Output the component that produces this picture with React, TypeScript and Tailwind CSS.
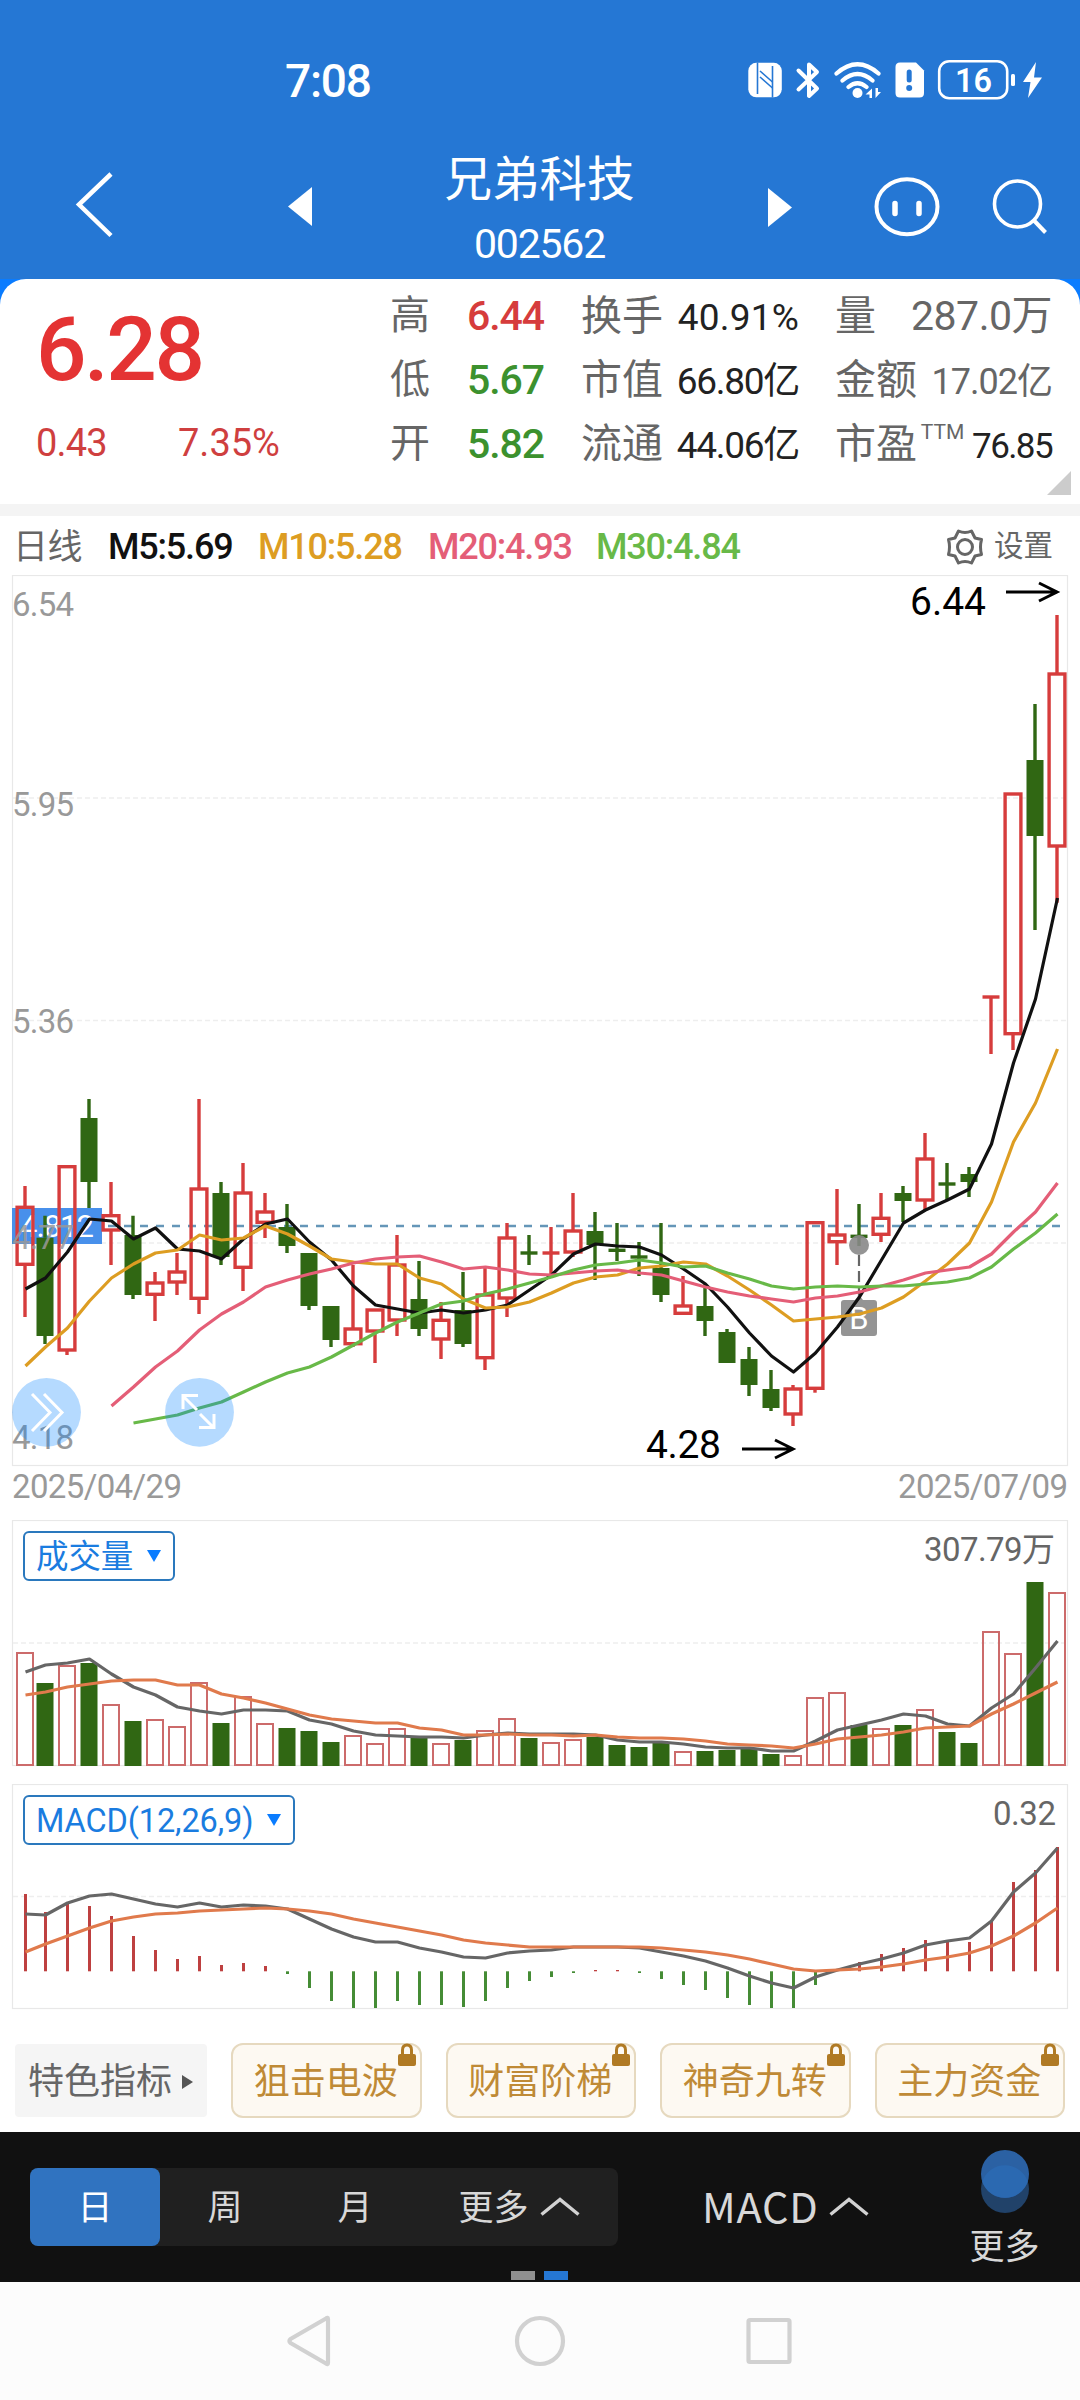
import React from "react";

const RED = "#d63c3c";
const GREEN = "#306713";

// direction, high, body top, body bottom, low
type Candle = [string, number, number, number, number];

const candles: Candle[] = [
  ["up", 1186, 1207.3, 1264.3, 1317],
  ["down", 1215.7, 1237.7, 1336, 1344],
  ["up", 1166.7, 1166.7, 1350, 1355],
  ["down", 1099, 1118, 1182, 1208],
  ["up", 1182, 1215.7, 1230, 1265],
  ["down", 1215.7, 1235, 1295, 1299],
  ["up", 1272, 1283, 1294.3, 1321],
  ["up", 1253, 1272, 1282, 1295],
  ["up", 1099, 1189, 1298.3, 1314],
  ["down", 1182, 1193, 1257, 1265],
  ["up", 1163, 1193, 1267.3, 1291],
  ["up", 1193, 1212, 1222.3, 1238],
  ["down", 1204, 1227, 1246, 1253],
  ["down", 1253, 1253, 1306, 1310],
  ["down", 1306, 1306, 1340, 1347],
  ["up", 1265, 1329, 1343.7, 1347],
  ["up", 1310, 1310, 1331, 1363],
  ["up", 1235, 1265, 1320, 1336],
  ["down", 1261, 1299, 1329, 1336],
  ["up", 1302, 1320.3, 1339, 1359],
  ["down", 1272, 1310, 1344, 1347],
  ["up", 1267, 1295, 1357.7, 1370],
  ["up", 1223, 1238, 1298, 1317],
  ["down", 1235, 1253, 1253, 1265],
  ["up", 1227, 1253, 1253, 1275],
  ["up", 1193, 1231, 1252, 1257],
  ["down", 1212, 1231, 1245, 1280],
  ["down", 1223, 1250.3, 1250.3, 1261],
  ["down", 1242, 1257, 1257, 1276],
  ["down", 1223, 1268, 1295, 1302],
  ["up", 1276, 1306, 1313.3, 1315],
  ["down", 1284, 1306, 1321, 1336],
  ["down", 1329, 1332, 1363, 1363],
  ["down", 1347, 1359, 1385, 1396],
  ["down", 1370, 1389, 1408, 1411],
  ["up", 1385, 1389, 1414, 1426],
  ["up", 1222.7, 1222.7, 1388.3, 1392.7],
  ["up", 1189, 1235, 1241.7, 1265],
  ["down", 1204, 1236.3, 1236.3, 1246],
  ["up", 1193, 1218.3, 1234.3, 1242],
  ["down", 1186, 1193, 1201, 1222],
  ["up", 1133, 1159, 1200, 1210],
  ["down", 1163, 1184, 1184, 1200],
  ["down", 1167, 1174, 1182, 1197],
  ["up", 997, 997, 997, 1054],
  ["up", 794, 794, 1033.7, 1050],
  ["down", 704, 760, 836, 930],
  ["up", 615, 674, 846, 902.7],
];

const ma5 = [1289, 1278, 1252, 1219, 1221, 1239, 1228, 1249, 1251, 1259, 1239, 1224, 1219, 1242, 1260, 1286, 1305, 1309, 1313, 1310, 1313, 1310, 1305, 1290, 1275, 1254, 1244, 1246, 1247, 1255, 1269, 1284, 1307, 1333, 1356, 1372, 1353, 1327, 1297, 1260, 1223, 1210, 1200, 1189, 1144, 1063, 999, 898];
const ma10 = [1366, 1347, 1328, 1301, 1278, 1264, 1253, 1250, 1235, 1240, 1238, 1226, 1234, 1246, 1259, 1262, 1264, 1264, 1278, 1284, 1299, 1308, 1307, 1302, 1293, 1283, 1277, 1275, 1268, 1266, 1262, 1264, 1276, 1290, 1305, 1321, 1319, 1317, 1314, 1308, 1297, 1281, 1264, 1243, 1202, 1142, 1103, 1049];
const ma20 = [1406, 1387, 1367, 1351, 1330, 1314, 1302, 1287, 1280, 1274, 1269, 1263, 1259, 1257, 1256, 1262, 1269, 1267, 1270, 1274, 1275, 1273, 1271, 1270, 1273, 1275, 1281, 1287, 1292, 1296, 1299, 1302, 1298, 1296, 1292, 1286, 1280, 1273, 1270, 1267, 1254, 1232, 1212, 1183];
const ma30 = [1423, 1419, 1415, 1408, 1402, 1392, 1382, 1373, 1367, 1357, 1345, 1333, 1322, 1313, 1304, 1301, 1294, 1289, 1283, 1277, 1270, 1265, 1263, 1260, 1263, 1267, 1266, 1273, 1279, 1286, 1289, 1287, 1286, 1287, 1286, 1286, 1284, 1282, 1278, 1267, 1249, 1233, 1214];

const volumes = [1653, 1683, 1666, 1663, 1705, 1721, 1720, 1727, 1683, 1723, 1697, 1724, 1728, 1731, 1742, 1736, 1744, 1729, 1738, 1744, 1740, 1731, 1719, 1738, 1743, 1740, 1737, 1745, 1747, 1743, 1752, 1751, 1750, 1749, 1754, 1756, 1698, 1693, 1725, 1729, 1725, 1710, 1732, 1743, 1632, 1654, 1582, 1593];
const vol5 = [1672, 1665, 1663, 1659, 1674, 1687, 1695, 1707, 1711, 1714, 1710, 1710, 1711, 1720, 1724, 1731, 1735, 1736, 1737, 1737, 1738, 1735, 1733, 1734, 1734, 1734, 1735, 1740, 1742, 1742, 1744, 1747, 1748, 1748, 1751, 1751, 1741, 1730, 1725, 1720, 1714, 1716, 1724, 1726, 1708, 1694, 1668, 1641];
const vol10 = [1695, 1692, 1687, 1684, 1681, 1680, 1680, 1685, 1685, 1694, 1698, 1703, 1709, 1715, 1719, 1721, 1723, 1723, 1728, 1730, 1735, 1735, 1734, 1735, 1735, 1736, 1735, 1737, 1738, 1738, 1739, 1741, 1744, 1745, 1746, 1748, 1744, 1739, 1737, 1735, 1732, 1728, 1727, 1726, 1714, 1704, 1693, 1682];

const macd = [1894, 1912, 1904, 1906, 1916, 1936, 1950, 1959, 1956, 1965, 1963, 1966, 1974, 1988, 2001, 2008, 2008, 2001, 2005, 2005, 2007, 2001, 1988, 1981, 1977, 1973, 1970, 1970, 1973, 1979, 1985, 1990, 1998, 2005, 2008, 2008, 1985, 1971.3, 1962, 1954, 1948, 1940, 1941, 1942, 1921, 1882, 1870, 1847];
const dif = [1914, 1915, 1903, 1896, 1894, 1899, 1904, 1907, 1903, 1907, 1905, 1906, 1909, 1919, 1929, 1937, 1942, 1942, 1948, 1952, 1957, 1958, 1953, 1951, 1950, 1947, 1947, 1947, 1948, 1952, 1956, 1961, 1968, 1976, 1983, 1988, 1977, 1970, 1964, 1959, 1953, 1945, 1941, 1938, 1921, 1892, 1873, 1848];
const dea = [1952, 1944, 1936, 1928, 1921, 1917, 1914, 1913, 1911, 1910, 1909, 1908, 1909, 1911, 1914, 1919, 1923, 1927, 1931, 1935, 1940, 1943, 1945, 1947, 1947, 1947, 1947, 1947, 1947, 1948, 1950, 1952, 1955, 1959, 1964, 1969, 1971, 1970, 1969, 1967, 1964, 1960, 1957, 1953, 1946, 1936, 1923, 1908];

const MACD_ZERO = 1971.3;

const cx = (i: number) => (i === 0 ? 25 : 23 + 22 * i);

const Line = ({ data, color, start = 0, width = 3.2 }: { data: number[]; color: string; start?: number; width?: number }) => (
  <polyline
    fill="none"
    stroke={color}
    strokeWidth={width}
    strokeLinejoin="round"
    points={data.map((y, i) => `${cx(i + start) + 0.5},${y}`).join(" ")}
  />
);

const GridLine = ({ y }: { y: number }) => (
  <line x1="13" x2="1066" y1={y} y2={y} stroke="#eeeeee" strokeWidth="1.5" strokeDasharray="5 3" />
);

const StatusBar = () => (
  <div className="flex h-[154px] items-start justify-between pt-[57px] pl-[285px] pr-[38px] text-white">
    <span className="text-[46px] font-medium leading-[48px] tracking-[-1.2px]">7:08</span>
    <svg width="296" height="42" viewBox="746 59 296 42" className="mt-0.5" fill="none">
      {/* nfc */}
      <rect x="748.300" y="62.800" width="33.500" height="34.500" rx="8" fill="#fff" />
      <path d="M757.500 62.500v31.500M772.500 66v31.500" stroke="#2577d4" strokeWidth="1.600" />
      <path d="M760 71l12.500 11M760 77l12.500 11" stroke="#2577d4" strokeWidth="1.600" />
      {/* bluetooth */}
      <path d="M798.500 70.500L817 88.500 809 96V64.500l8 7.500-18.500 17.500" stroke="#fff" strokeWidth="4" strokeLinejoin="round" strokeLinecap="round" />
      {/* wifi */}
      <path d="M836.500 73.500q21-18.500 42 0M842.500 80.500q15-13 30 0M848.500 87q9-7.500 18 0" stroke="#fff" strokeWidth="4.200" strokeLinecap="round" />
      <circle cx="857.500" cy="93" r="5" fill="#fff" />
      <path d="M865.500 94.500l6.500-6V98h-2.500v-3.500zM881 92l-5.500 6v-10h2.500v4z" fill="#fff" />
      {/* sim alert */}
      <path d="M900 62.500h16l8 8V93q0 4.500-4.500 4.500H900q-4.500 0-4.500-4.500V67q0-4.500 4.500-4.500z" fill="#fff" />
      <path d="M909.200 72v8" stroke="#2577d4" strokeWidth="5" strokeLinecap="round" />
      <circle cx="909.200" cy="88" r="3" fill="#2577d4" />
      {/* battery */}
      <rect x="939.200" y="61.200" width="68" height="37" rx="10" stroke="#fff" strokeWidth="2.600" />
      <text x="955" y="91.800" fill="#fff" fontSize="34" fontWeight="600" textLength="37" lengthAdjust="spacingAndGlyphs">16</text>
      <rect x="1011" y="74" width="4" height="12" rx="1.500" fill="#fff" />
      <path d="M1036 62l-13 20h7.500l-2.500 16 14-20.500h-8z" fill="#fff" />
    </svg>
  </div>
);

const TitleBar = () => (
  <div className="flex h-[125px] items-start text-white">
    <svg width="250" height="100" viewBox="75 154 250 100" className="ml-[75px]" fill="none">
      <path d="M111 174L79 204.500 111 235.500" stroke="#fff" strokeWidth="4.500" />
      <path d="M312 187v39l-24-19.500z" fill="#fff" />
    </svg>
    <div className="flex w-[430px] flex-col items-center pt-0.5">
      <h1 className="-ml-px text-[47.500px] leading-[48px]">兄弟科技</h1>
      <span className="-ml-px mt-[18px] text-[41px] leading-[44px] tracking-[-1.200px]">002562</span>
    </div>
    <svg width="300" height="100" viewBox="755 154 300 100" fill="none">
      <path d="M768 188v39l24-19.500z" fill="#fff" />
      <ellipse cx="907" cy="206.700" rx="30.500" ry="27.500" stroke="#fff" strokeWidth="4" />
      <path d="M895 203.500v10M919 203.500v10" stroke="#fff" strokeWidth="5.500" strokeLinecap="round" />
      <circle cx="1017.500" cy="204" r="23" stroke="#fff" strokeWidth="3.600" />
      <path d="M1034 220.500l11.500 12" stroke="#fff" strokeWidth="4" />
    </svg>
  </div>
);

const QuotePanel = () => (
  <section className="bg-[#0a7cff]">
    <div className="relative flex h-[225px] rounded-t-[26px] bg-white pt-[5px]">
      <div className="w-[390px] pl-[36px]">
        <div className="pt-[26px] text-[89px] font-medium leading-[80px] tracking-[-2.500px] text-[#e43333]">6.28</div>
        <div className="mt-[33px] flex text-[38px] leading-[40px] tracking-[-0.800px] text-[#cf3f3f]">
          <span className="w-[142px]">0.43</span>
          <span className="tracking-normal">7.35%</span>
        </div>
      </div>

      <div className="grid h-48 w-[191px] grid-cols-[77px_1fr] grid-rows-3 items-center text-[40px] leading-none text-[#666]">
        <span>高</span>
        <span className="text-[41px] font-medium tracking-[-1.100px] text-[#d63c3c]">6.44</span>
        <span>低</span>
        <span className="text-[41px] font-medium tracking-[-1.100px] text-[#3c912e]">5.67</span>
        <span>开</span>
        <span className="text-[41px] font-medium tracking-[-1.100px] text-[#3c912e]">5.82</span>
      </div>

      <div className="grid h-48 w-[218px] grid-rows-3 items-center text-[41px] leading-none text-[#666]">
        <div className="flex items-center justify-between">
          <span>换手</span>
          <span className="pt-[3px] text-[37px] tracking-[0.200px] text-[#222]">40.91%</span>
        </div>
        <div className="flex items-center justify-between">
          <span>市值</span>
          <span className="pt-[3px] text-[37px] tracking-[-1.300px] text-[#222]">66.80亿</span>
        </div>
        <div className="flex items-center justify-between">
          <span>流通</span>
          <span className="pt-[3px] text-[37px] tracking-[-1.300px] text-[#222]">44.06亿</span>
        </div>
      </div>

      <div className="ml-[36px] grid h-48 w-[217px] grid-rows-3 items-center text-[41px] leading-none text-[#666]">
        <div className="flex items-center justify-between">
          <span>量</span>
          <span className="text-[41px] tracking-[-0.500px]">287.0万</span>
        </div>
        <div className="flex items-center justify-between">
          <span>金额</span>
          <span className="pt-[3px] text-[36px] tracking-[-1px]">17.02亿</span>
        </div>
        <div className="flex items-center justify-between">
          <span>市盈</span>
          <span className="mb-6 -ml-1 text-[21px]">TTM</span>
          <span className="pt-[5px] text-[35px] tracking-[-1.600px] text-[#222]">76.85</span>
        </div>
      </div>
      <svg width="24" height="24" viewBox="0 0 24 24" className="absolute right-[9px] bottom-[9px]">
        <path d="M24 0v24H0z" fill="#cccccc" />
      </svg>
    </div>
    <div className="h-3 bg-[#f4f4f4]" />
  </section>
);

const AverageRow = () => (
  <div className="flex h-[59px] items-center pt-[3px] pl-[13px] pr-[27px] text-[36px] font-medium leading-none tracking-[-1.200px]">
    <span className="w-[95px] text-[35px] font-normal tracking-[-0.500px] text-[#666]">日线</span>
    <span className="w-[150px] text-[#111]">M5:5.69</span>
    <span className="w-[170px] text-[#dd9d22]">M10:5.28</span>
    <span className="w-[168px] text-[#e45e77]">M20:4.93</span>
    <span className="text-[#68b948]">M30:4.84</span>
    <svg width="38" height="38" viewBox="0 0 38 38" className="ml-auto" fill="none" stroke="#666" strokeWidth="3">
      <path d="M12.500 3q6.500 3 13 0l3.500 7 6.500 1.500q-2 7.500 0 15L29 28l-3.500 7q-6.500-3-13 0L9 28l-6.500-1.500q2-7.500 0-15L9 10z" strokeLinejoin="round" />
      <circle cx="19" cy="19" r="7.500" />
    </svg>
    <span className="ml-2.5 text-[29.500px] font-normal tracking-normal text-[#666]">设置</span>
  </div>
);

const PriceChart = () => (
  <svg width="1080" height="946" viewBox="0 575 1080 946" fill="none" className="block">
    <rect x="12.500" y="575.500" width="1055" height="890" stroke="#e8e8e8" strokeWidth="1.200" />
    <GridLine y={798} />
    <GridLine y={1020.5} />
    <GridLine y={1243} />

    {/* reference price */}
    <line x1="108" x2="1061" y1="1226" y2="1226" stroke="#6596b8" strokeWidth="2.400" strokeDasharray="8 8" />
    <rect x="12" y="1208" width="90" height="36" fill="#4890eb" />
    <text x="20" y="1236.500" fill="#fff" fontSize="31" textLength="74">4.812</text>

    {candles.map(([dir, high, top, bottom, low], i) => {
      const x = cx(i);
      const color = dir === "up" ? RED : GREEN;
      return (
        <g key={i} stroke={color} strokeWidth="3.400">
          <path d={`M${x} ${high}V${top}M${x} ${bottom}V${low}`} />
          {top === bottom ? (
            <path d={`M${x - 8.5} ${top}H${x + 8.5}`} />
          ) : dir === "up" ? (
            <rect x={x - 7.9} y={top} width="15.800" height={bottom - top} />
          ) : (
            <rect x={x - 8.5} y={top} width="17" height={bottom - top} fill={GREEN} stroke="none" />
          )}
        </g>
      );
    })}

    {/* buy marker */}
    <path d="M859 1255v42" stroke="#666" strokeWidth="2.200" strokeDasharray="11 5" />
    <circle cx="859" cy="1245" r="10" fill="#888" fillOpacity="0.9" />
    <path d="M855 1300l4-5 4 5h11q3 0 3 3v30q0 3-3 3h-30q-3 0-3-3v-30q0-3 3-3z" fill="#949494" />
    <text x="859" y="1329" fill="#fff" fontSize="31" textAnchor="middle">B</text>

    <Line data={ma5} color="#111111" />
    <Line data={ma10} color="#dd9d22" />
    <Line data={ma20} color="#e45e77" start={4} />
    <Line data={ma30} color="#68b948" start={5} />

    <g fill="#999" fontSize="33">
      <text x="12" y="616" textLength="62">6.54</text>
      <text x="12" y="816" textLength="62">5.95</text>
      <text x="12" y="1033" textLength="62">5.36</text>
      <text x="12" y="1249" textLength="62" fillOpacity="0.85">4.77</text>
      <text x="12" y="1449" textLength="62">4.18</text>
      <text x="12" y="1498" textLength="170">2025/04/29</text>
      <text x="898" y="1498" textLength="170">2025/07/09</text>
    </g>

    <g fill="#000" fontSize="39">
      <text x="910" y="614.500" textLength="76">6.44</text>
      <text x="646" y="1458" textLength="75">4.28</text>
    </g>
    <path d="M1006 592h50M1039 583l18 9-18 9M742 1449h51M775 1440l18 9-18 9" stroke="#000" strokeWidth="3" />

    <circle cx="46.500" cy="1412.300" r="34.400" fill="#0a84ff" fillOpacity="0.3" />
    <path d="M32 1394l18 18.500-18 18.500M44 1394l18 18.500-18 18.500" stroke="#fff" strokeWidth="3" />
    <circle cx="199.500" cy="1412.300" r="34.400" fill="#0a84ff" fillOpacity="0.3" />
    <path d="M197 1410l-14-14M183 1409v-13.500h15M200 1414l14 14M214 1414v13.500h-15" stroke="#fff" strokeWidth="3" />
  </svg>
);

const IndicatorButton = ({ label }: { label: string }) => (
  <button className="absolute left-[23px] top-[11px] flex h-[50px] items-center gap-[14px] rounded-md border-2 border-[#2a78bd] bg-white pl-[11px] pr-3 text-[32.500px] leading-none tracking-[-0.100px] text-[#1a7ce0]">
    <span className="pt-0.5">{label}</span>
    <svg width="14" height="12" viewBox="0 0 14 12">
      <path d="M0 0h14L7 12z" fill="#0a7cff" />
    </svg>
  </button>
);

const VolumeChart = () => (
  <div className="relative h-[264px]">
    <svg width="1080" height="264" viewBox="0 1520 1080 264" fill="none" className="block">
      <rect x="12.500" y="1520.500" width="1055" height="245" stroke="#e8e8e8" strokeWidth="1.200" />
      <GridLine y={1643} />
      {volumes.map((top, i) =>
        candles[i][0] === "up" ? (
          <rect key={i} x={cx(i) - 8} y={top} width="16" height={1765 - top} stroke="#cc6b6b" strokeWidth="2" />
        ) : (
          <rect key={i} x={cx(i) - 8.5} y={top} width="17" height={1766 - top} fill={GREEN} />
        )
      )}
      <Line data={vol5} color="#666666" />
      <Line data={vol10} color="#e07a4c" />
      <text x="924" y="1561" fill="#666" fontSize="33" textLength="131">307.79万</text>
    </svg>
    <IndicatorButton label="成交量" />
  </div>
);

const MacdChart = () => (
  <div className="relative h-[248px]">
    <svg width="1080" height="248" viewBox="0 1784 1080 248" fill="none" className="block">
      <rect x="12.500" y="1784.500" width="1055" height="224" stroke="#e8e8e8" strokeWidth="1.200" />
      <GridLine y={1896.5} />
      {macd.map((y, i) => (
        <path
          key={i}
          d={`M${cx(i) + 0.5} ${MACD_ZERO}V${y}`}
          stroke={y < MACD_ZERO ? "#be4040" : "#458c35"}
          strokeWidth="3"
        />
      ))}
      <Line data={dif} color="#666666" />
      <Line data={dea} color="#e07a4c" />
      <text x="993" y="1825" fill="#666" fontSize="33" textLength="63">0.32</text>
    </svg>
    <IndicatorButton label="MACD(12,26,9)" />
  </div>
);

const chips = ["狙击电波", "财富阶梯", "神奇九转", "主力资金"];

const FeatureRow = () => (
  <div className="flex h-[100px] items-start gap-6 pl-[15px] pr-[15px] pt-[11px]">
    <div className="mt-px flex h-[73px] w-[192px] items-center justify-center gap-2.5 rounded bg-[#f5f5f5] pt-[3px] pr-px text-[36px] leading-none text-[#666]">
      特色指标
      <svg width="11" height="14" viewBox="0 0 11 14">
        <path d="M0 0v14l11-7z" fill="#555" />
      </svg>
    </div>
    {chips.map((chip) => (
      <div
        key={chip}
        className="relative flex h-[75px] flex-1 items-center justify-center rounded-xl border-2 border-[#e6d9bf] bg-[#fdf9f2] pt-[3px] pr-px text-[36px] leading-none text-[#bf8a36]"
      >
        {chip}
        <svg width="18" height="24" viewBox="0 0 18 24" className="absolute -top-[2px] right-[4px]" fill="none">
          <path d="M4.500 11V7q0-5 4.500-5t4.500 5v4" stroke="#b07a24" strokeWidth="3" />
          <rect y="11" width="18" height="12" rx="2" fill="#b07a24" />
        </svg>
      </div>
    ))}
  </div>
);

const ChevronUp = () => (
  <svg width="40" height="20" viewBox="0 0 40 20" fill="none">
    <path d="M1.500 17.500L20 2.500l18.500 15" stroke="#d2d2d2" strokeWidth="3.400" />
  </svg>
);

const PeriodBar = () => (
  <div className="relative flex h-[150px] items-start bg-[#111] pl-[30px] pt-9 text-[35px] leading-none text-[#d8d8d8]">
    <div className="flex h-[78px] w-[588px] items-center rounded-lg bg-[#202020]">
      <div className="flex h-full w-[130px] items-center justify-center rounded-lg bg-[#3073c0] pt-[3px] text-white">日</div>
      <div className="w-[130px] pt-[3px] text-center">周</div>
      <div className="w-[130px] pt-[3px] text-center">月</div>
      <div className="flex flex-1 items-center justify-center gap-[11px]">
        <span className="pt-[3px]">更多</span>
        <ChevronUp />
      </div>
    </div>
    <div className="ml-[84px] flex h-[78px] w-[170px] items-center gap-[10px] font-['Noto_Sans_CJK_SC',sans-serif] text-[41.500px] tracking-[0.800px]">
      <span className="pb-[3px]">MACD</span>
      <ChevronUp />
    </div>
    <div className="-mt-[18px] ml-[80px] flex w-[105px] flex-col items-center">
      <svg width="48" height="63" viewBox="0 0 48 63">
        <circle cx="24" cy="39" r="24" fill="#214269" />
        <circle cx="24" cy="24" r="24" fill="#2b61a3" />
        <path d="M1.300 31.500a24 24 0 0 1 45.400 0 24 24 0 0 1-45.400 0z" fill="#2b69b1" />
      </svg>
      <span className="mt-[17px]">更多</span>
    </div>
    <div className="absolute bottom-[2px] left-[511px] flex gap-[9px]">
      <div className="h-[9px] w-6 bg-[#909090]" />
      <div className="h-[9px] w-6 bg-[#2577d4]" />
    </div>
  </div>
);

const SystemNav = () => (
  <div className="flex h-[118px] items-center justify-center bg-[#fcfcfc]">
    <svg width="520" height="60" viewBox="280 2311 520 60" fill="none" stroke="#d1d1d1" strokeWidth="4.200">
      <path d="M328 2319v44q0 2-2 .500L290.500 2343q-2-2 0-4L326 2318.500q2-1.500 2 .500z" strokeLinejoin="round" />
      <circle cx="540" cy="2341" r="23" />
      <rect x="748.500" y="2320" width="41" height="42" rx="1.500" />
    </svg>
  </div>
);

export default function App() {
  return (
    <main className="h-[2400px] w-[1080px] overflow-hidden bg-white font-['Roboto','Noto_Sans_CJK_SC',sans-serif]">
      <header className="bg-[#2577d4]">
        <StatusBar />
        <TitleBar />
      </header>
      <QuotePanel />
      <AverageRow />
      <div className="h-[945px] overflow-hidden">
        <PriceChart />
      </div>
      <VolumeChart />
      <MacdChart />
      <FeatureRow />
      <PeriodBar />
      <SystemNav />
    </main>
  );
}
